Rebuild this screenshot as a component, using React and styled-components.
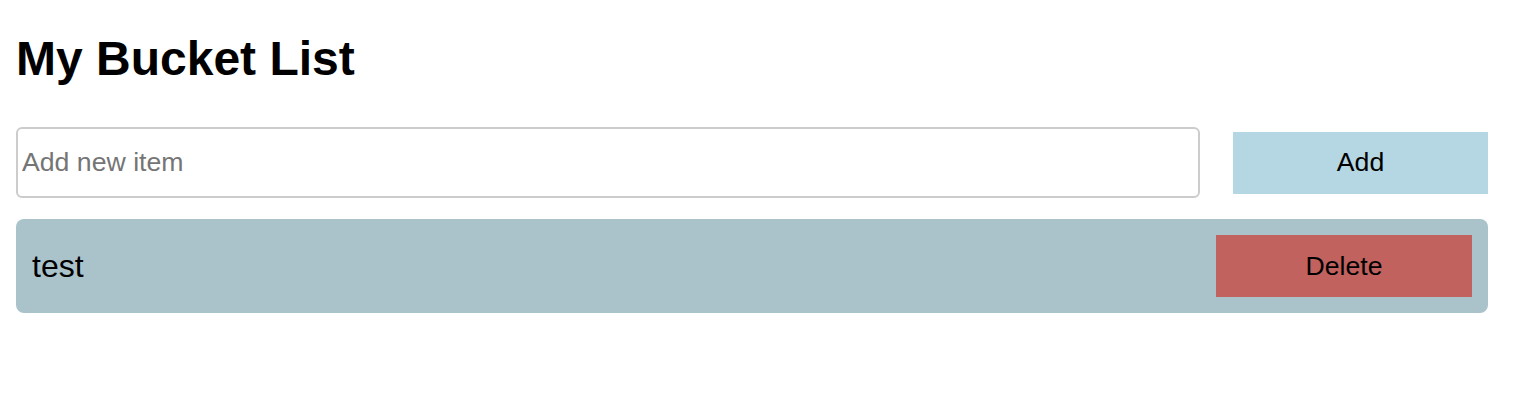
import React, { useState } from 'react';
import styled, { createGlobalStyle } from 'styled-components';

const GlobalStyle = createGlobalStyle`
  body {
    margin: 0;
    background: #fff;
    font-family: 'Liberation Sans', Arial, sans-serif;
  }
`;

const Page = styled.div`
  padding: 16px 52px 16px 16px;
`;

const Title = styled.h1`
  font-size: 48px;
  font-weight: bold;
  margin: 15px 0 41px;
  line-height: normal;
`;

const Form = styled.form`
  display: flex;
  align-items: center;
  gap: 33px;
  margin-bottom: 21px;
`;

const Input = styled.input`
  flex: 1;
  height: 71px;
  box-sizing: border-box;
  border: 2px solid #cccccc;
  border-radius: 6px;
  padding: 0 4px;
  font-size: 26.67px;
  font-family: 'Liberation Sans', Arial, sans-serif;
  outline: none;

  &::placeholder {
    color: #757575;
  }
`;

const Button = styled.button`
  width: ${(p) => p.$width || 256}px;
  height: 62px;
  border: none;
  background: ${(p) => p.$bg};
  color: #000;
  font-size: 26.67px;
  font-family: 'Liberation Sans', Arial, sans-serif;
  cursor: pointer;
  flex-shrink: 0;
`;

const List = styled.ul`
  list-style: none;
  margin: 0;
  padding: 0;
`;

const Item = styled.li`
  display: flex;
  align-items: center;
  justify-content: space-between;
  background: #aac3cb;
  border-radius: 8px;
  padding: 16px;
  font-size: 32px;
  margin-bottom: 16px;
`;

export default function App() {
  const [items, setItems] = useState(['test']);
  const [text, setText] = useState('');

  const add = (e) => {
    e.preventDefault();
    if (!text.trim()) return;
    setItems([...items, text]);
    setText('');
  };

  return (
    <Page>
      <GlobalStyle />
      <Title>My Bucket List</Title>
      <Form onSubmit={add}>
        <Input
          placeholder="Add new item"
          value={text}
          onChange={(e) => setText(e.target.value)}
        />
        <Button type="submit" $bg="#b5d7e3" $width={255}>Add</Button>
      </Form>
      <List>
        {items.map((item, i) => (
          <Item key={i}>
            <span>{item}</span>
            <Button $bg="#c1625f" onClick={() => setItems(items.filter((_, j) => j !== i))}>
              Delete
            </Button>
          </Item>
        ))}
      </List>
    </Page>
  );
}
